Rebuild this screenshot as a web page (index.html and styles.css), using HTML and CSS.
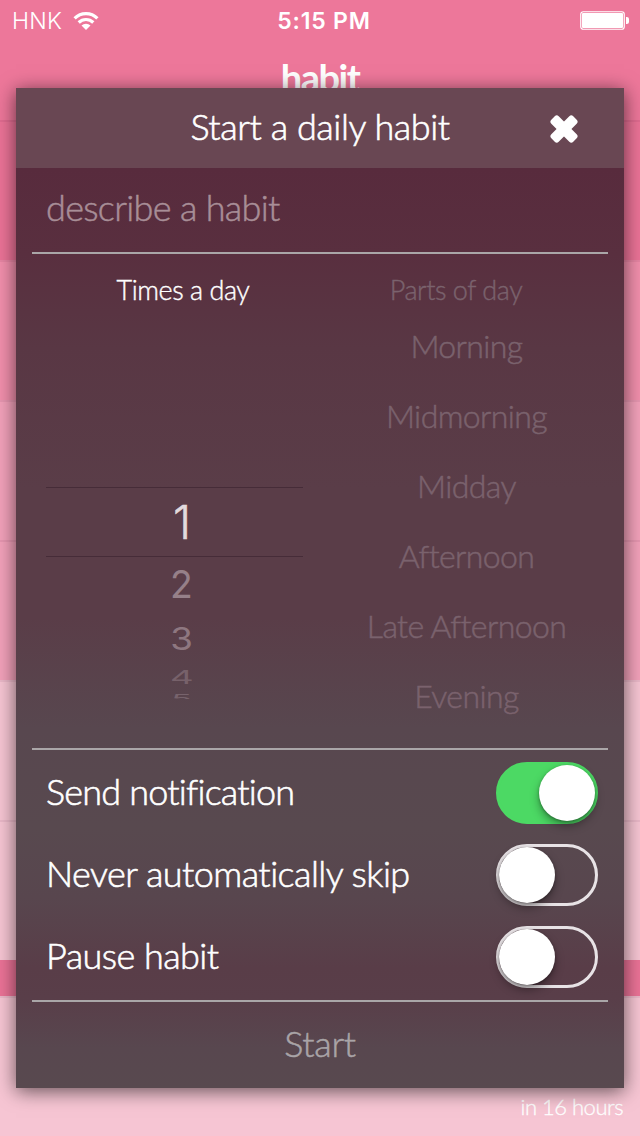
FILE: index.html
```html
<!DOCTYPE html>
<html lang="en">
<head>
<meta charset="utf-8">
<title>habit</title>
<link rel="stylesheet" href="styles.css">
</head>
<body>
<div class="screen">
  <div class="backdrop">
    <header class="top">
      <div class="status">
        <div class="carrier">
          <span>HNK</span>
          <svg class="wifi" viewBox="0 0 26 20" width="26" height="20" fill="none" stroke="#fff" stroke-width="3.2">
            <path d="M1.6 7.3a16.2 16.2 0 0 1 22.8 0"/>
            <path d="M5.7 11.5a10.4 10.4 0 0 1 14.6 0"/>
            <path d="M13 19l-4.5-4.5a6.4 6.4 0 0 1 9 0z" fill="#fff" stroke="none"/>
          </svg>
        </div>
        <div class="clock">5:15 PM</div>
        <svg class="battery" viewBox="0 0 50 20" width="50" height="20">
          <rect x=".75" y=".75" width="43.5" height="17.5" rx="2.5" fill="none" stroke="#fff" stroke-width="1.2"/>
          <rect x="2" y="2" width="41" height="15" rx="1" fill="#fff"/>
          <path d="M46 6h.8q2.2 0 2.2 2v3q0 2-2.2 2H46z" fill="#fff"/>
        </svg>
      </div>
      <div class="app-title">habit</div>
    </header>
    <div class="row shade-1"></div>
    <div class="row shade-2"></div>
    <div class="row shade-3"></div>
    <div class="row shade-3"></div>
    <div class="row shade-4"></div>
    <div class="row shade-4"></div>
    <div class="section"></div>
    <div class="row last"><span class="due">in 16 hours</span></div>
  </div>

  <main class="modal">
    <header class="modal-head">
      <h1>Start a daily habit</h1>
      <svg class="close" viewBox="0 0 28 28" width="28" height="28" fill="#fff">
        <rect x="-1.5" y="8.8" width="31" height="10.4" rx="2.8" transform="rotate(45 14 14)"/>
        <rect x="-1.5" y="8.8" width="31" height="10.4" rx="2.8" transform="rotate(-45 14 14)"/>
      </svg>
    </header>
    <div class="field">describe a habit</div>
    <div class="pickers">
      <section class="times">
        <h2>Times a day</h2>
        <div class="wheel">
          <div class="picked"><span>1</span></div>
          <div class="digit d2"><span>2</span></div>
          <div class="digit d3"><span>3</span></div>
          <div class="digit d4"><span>4</span></div>
          <div class="digit d5"><span>5</span></div>
        </div>
      </section>
      <section class="parts">
        <h2>Parts of day</h2>
        <ul>
          <li>Morning</li>
          <li>Midmorning</li>
          <li>Midday</li>
          <li>Afternoon</li>
          <li>Late Afternoon</li>
          <li>Evening</li>
        </ul>
      </section>
    </div>
    <div class="options">
      <div class="option"><span class="notify">Send notification</span><i class="switch on"></i></div>
      <div class="option"><span>Never automatically skip</span><i class="switch"></i></div>
      <div class="option"><span>Pause habit</span><i class="switch"></i></div>
    </div>
    <div class="start">Start</div>
  </main>
</div>
</body>
</html>
```
FILE: styles.css
```css
* { box-sizing: border-box; margin: 0; padding: 0; }
body { font-family: Lato, "Open Sans", sans-serif; font-weight: 300; color: #fff; }
h1, h2 { font-weight: 300; }
ul { list-style: none; }

.screen { position: relative; width: 640px; height: 1136px; overflow: hidden; }
.backdrop { display: flex; flex-direction: column; height: 1136px; }

.top { height: 120px; background: #ed779a; }
.status {
  display: grid; grid-template-columns: 1fr auto 1fr; align-items: center;
  height: 42px; padding: 0 10px 0 12px;
  font-family: Inter, sans-serif; font-size: 23px; font-weight: 300;
}
.carrier { display: flex; align-items: center; gap: 11px; letter-spacing: .3px; }
.clock { font-weight: 600; letter-spacing: .8px; padding-left: 6px; font-size: 23px; }
.battery { justify-self: end; }
.app-title {
  padding-top: 11px; text-align: center;
  font-size: 38px; line-height: 48px; font-weight: 700; letter-spacing: -1.5px;
}

.row { height: 140px; border-top: 2px solid rgba(80, 20, 50, .07); }
.shade-1 { background: #eb7397; }
.shade-2 { background: #f18fac; }
.shade-3 { background: #f2a1ba; }
.shade-4 { background: #f6c5d3; }
.section { height: 36px; background: #eb7397; }
.last { display: flex; justify-content: flex-end; padding: 95px 17px 0 0; background: #f6c5d3; }
.due { font-size: 22px; line-height: 28px; letter-spacing: -.5px; -webkit-text-stroke: .3px; }

.modal {
  position: absolute; left: 16px; top: 88px; width: 608px; height: 1000px;
  display: flex; flex-direction: column;
  background: linear-gradient(#582b3d 80px, #592f3f 166px, #593744 260px, #5a3d48 400px, #5a3d48 530px, #58474f 640px, #58494f 740px, #58464e 810px, #593d48 880px, #593e49 910px, #58474f 960px, #58494f);
  box-shadow: 0 3px 18px rgba(0, 0, 0, .6);
}
.modal-head {
  position: relative; height: 80px; background: #694753;
  display: flex; align-items: center; justify-content: center;
}
.modal-head h1 { padding-bottom: 4px; font-size: 36px; line-height: 76px; letter-spacing: -.45px; -webkit-text-stroke: .6px; }
.close { position: absolute; right: 46px; top: 27px; }

.field {
  height: 86px; margin: 0 16px; padding-left: 14px; border-bottom: 2px solid #aaa6a8;
  font-size: 36px; line-height: 78px; letter-spacing: -.68px; color: #a88e97; -webkit-text-stroke: .5px;
}
.pickers {
  display: grid; grid-template-columns: 262px 1fr; column-gap: 10px;
  height: 496px; margin: 0 16px; padding-left: 12px; border-bottom: 2px solid #aaa6a8;
}
.pickers h2 { font-size: 27px; line-height: 36px; letter-spacing: -.45px; text-align: center; -webkit-text-stroke: .4px; }
.times { padding-top: 18px; }
.times h2 { padding-left: 16px; }
.wheel { padding: 179px 3px 0 2px; font-family: Inter, sans-serif; font-weight: 400; text-align: center; }
.picked {
  height: 70px; border: solid #462c38; border-width: 1px 0; padding-left: 15px;
  font-size: 46px; line-height: 69px; font-weight: 300; color: #e2dadd; -webkit-text-stroke: .5px;
}
.digit { display: flex; justify-content: center; padding-left: 14px; font-size: 34px; line-height: 34px; }
.d2 { height: 57px; padding-top: 11px; color: #968089; }
.d2 span { transform: scale(1.1, 1.14); }
.d3 { height: 46px; padding-top: 8px; color: #8e7780; }
.d3 span { transform: scale(1.08, .9); }
.d4 { height: 33px; color: #77616a; }
.d4 span { transform: scale(1.08, .56); }
.d5 { height: 6px; overflow: hidden; color: #77636c; }
.d5 span { transform: translateY(-2.4px) scaleY(.35); }

.parts { padding: 18px 12px 0 0; text-align: center; color: #7a626d; }
.parts ul { padding: 3px 0 0 18px; }
.parts li { height: 70px; margin-right: -3px; font-size: 32px; line-height: 70px; letter-spacing: -.6px; white-space: nowrap; -webkit-text-stroke: .5px; }

.options { height: 252px; margin: 0 16px; padding-top: 2px; border-bottom: 2px solid #aaa6a8; }
.option {
  display: flex; justify-content: space-between; align-items: center;
  height: 82px; padding: 0 10px 0 14px;
  font-size: 36px; line-height: 76px; letter-spacing: -.55px; -webkit-text-stroke: .6px;
}
.option span { padding-bottom: 4px; }
.notify { letter-spacing: -.8px; }
.switch { display: flex; width: 102px; height: 62px; border: 3px solid #e8e3e6; border-radius: 31px; }
.switch::after {
  content: ""; width: 56px; height: 56px; border-radius: 50%; background: #fff;
  box-shadow: 0 5px 10px rgba(0, 0, 0, .35), 0 1px 3px rgba(0, 0, 0, .3);
}
.switch.on { justify-content: flex-end; background: #4cd964; border-color: #4cd964; }
.start { height: 86px; text-align: center; font-size: 36px; line-height: 83px; color: #a9a4a7; letter-spacing: -.3px; -webkit-text-stroke: .5px; }
```
